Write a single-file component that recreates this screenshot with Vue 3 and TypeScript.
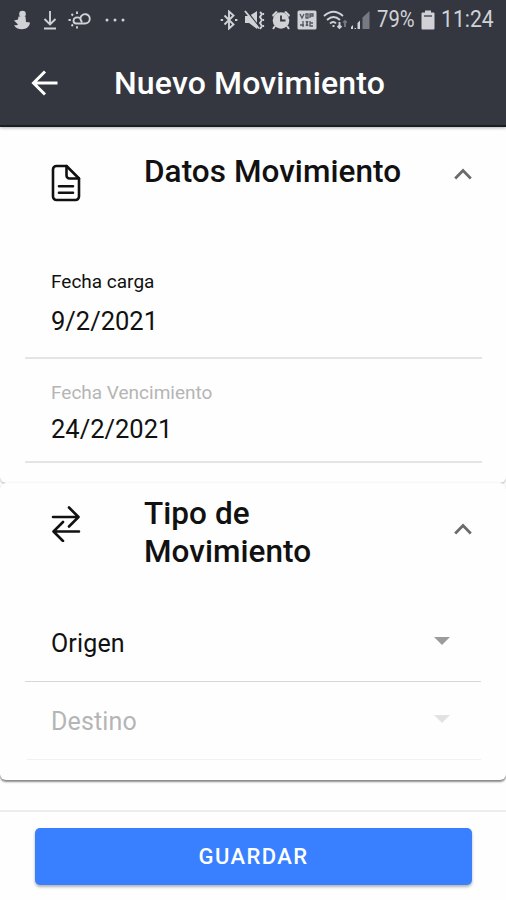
<script setup lang="ts">
import { ref } from 'vue'

interface DateField {
  label: string
  value: string
  muted: boolean
}

interface SelectField {
  label: string
  disabled: boolean
}

const dates = ref<DateField[]>([
  { label: 'Fecha carga', value: '9/2/2021', muted: false },
  { label: 'Fecha Vencimiento', value: '24/2/2021', muted: true },
])

const selects = ref<SelectField[]>([
  { label: 'Origen', disabled: false },
  { label: 'Destino', disabled: true },
])
</script>

<template>
  <div class="screen">
    <header class="header">
      <div class="status">
        <div class="status-left">
          <svg class="ic-figure" width="18" height="20" viewBox="0 0 18 20">
            <circle cx="9.500" cy="4" r="3.300" />
            <path d="M5.500 6.500h7l.5 5.500 4 .5c-.6 4.500-3.500 6.700-8 6.700-4 0-6.500-1.200-8-4.200 2 .6 3.200.4 4-.4L1 10.500l4-1z" />
          </svg>
          <svg width="14" height="20" viewBox="0 0 14 20" class="line">
            <path d="M7 1v13M1.500 9L7 14.500 12.500 9M1 18.500h12" />
          </svg>
          <svg width="24" height="18" viewBox="0 0 24 18" class="line">
            <path d="M8 12.500h9a4.700 4.700 0 1 0-4.400-6.200c-.6 2 .1 3.400 1.600 4.700M12 7C9 5.500 5.500 6.800 5.500 9.500c0 1.800 1 3 2.700 3" />
            <path d="M9 .5v2.500M3.500 3l1.500 1.500M.5 9h2.300M3.500 15L5 13.500M9 15.200v2.300" />
          </svg>
          <svg width="20" height="4" viewBox="0 0 20 4">
            <circle cx="2" cy="2" r="1.500" /><circle cx="10" cy="2" r="1.500" /><circle cx="18" cy="2" r="1.500" />
          </svg>
        </div>
        <div class="status-right">
          <svg width="18" height="20" viewBox="0 0 18 20" class="line">
            <path d="M4.500 5.500l9 9L9 18.500v-17l4.500 4-9 9" />
            <path d="M.7 10h2.400M15 10h2.400" />
          </svg>
          <svg width="21" height="20" viewBox="0 0 21 20">
            <path d="M1 6h4l8-5v18l-8-6H1z" />
            <path d="M2.500 .5l13 17" stroke="#343740" stroke-width="1.500" />
            <path class="line" d="M1 1l14 17.500" />
            <path class="line" d="M16 2l2 2-2 3 2 3-2 3 2 3-2 3" />
            <path class="line thin" d="M19.500 3v2M19.500 9v2M19.500 15v2" />
          </svg>
          <svg width="20" height="20" viewBox="0 0 20 20">
            <path d="M1 5l4-4 2 1-5 5zM19 5l-4-4-2 1 5 5z" />
            <circle cx="10" cy="10.500" r="8.300" />
            <path d="M4 16l-2 3M16 16l2 3" stroke="#d0d2d6" stroke-width="2" />
            <path d="M10 5.500v5h4.500" fill="none" stroke="#343740" stroke-width="1.800" />
          </svg>
          <svg width="20" height="20" viewBox="0 0 20 20">
            <rect x=".5" y=".5" width="19" height="19" rx="1.500" />
            <path d="M3 4l2 4 2-4M9 4v4h2V4zM13 8V4h3v2h-3M3 15h4M6 11v6M9 11l2 5M11 11l-2 5M13 11v5h3M13 13h3" fill="none" stroke="#555862" stroke-width="1.300" />
          </svg>
          <svg width="25" height="20" viewBox="0 0 25 20" class="line">
            <path d="M1 6Q10.500-2.500 20 6M4 10Q10.500 4 17 10M7 13.500q3.500-3 6 0" />
            <path d="M10.500 15v2M16.500 12v6M14.500 16l2 2 2-2" />
            <path class="dim" d="M22 17v-6M20.300 12.700L22 11l1.700 1.700" />
          </svg>
          <svg width="19" height="20" viewBox="0 0 19 20">
            <path d="M0 19v-2l2-2v4zM3.500 19v-1h1.500v1zM6.500 19v-6l2.500-2.500V19z" />
            <path d="M11.500 19V7.500L18.500 1v18z" fill="#777a82" />
          </svg>
          <span class="battery-text">79%</span>
          <svg width="14" height="20" viewBox="0 0 14 20">
            <path d="M4 .5h6v2h2.500a1 1 0 0 1 1 1v15a1 1 0 0 1-1 1h-11a1 1 0 0 1-1-1v-15a1 1 0 0 1 1-1H4z" />
            <path d="M3 6h8" stroke="#4c4f58" stroke-width="1.500" />
          </svg>
          <span class="clock">11:24</span>
        </div>
      </div>
      <div class="toolbar">
        <svg class="back" width="28" height="28" viewBox="0 0 28 28">
          <path d="M26.500 14H3M14 2.500L2.500 14 14 25.500" />
        </svg>
        <h1 class="title">Nuevo Movimiento</h1>
      </div>
    </header>

    <main class="content">
      <section class="card card-dates">
        <div class="card-head">
          <svg class="head-icon" width="30" height="38" viewBox="0 0 30 38">
            <path d="M5.500 2h10L28 14.500V32.500a3.500 3.500 0 0 1-3.500 3.500h-19A3.500 3.500 0 0 1 2 32.500v-27A3.500 3.500 0 0 1 5.500 2z" />
            <path d="M15.500 2v9.500a3 3 0 0 0 3 3H28M8 22.300h14M8 28.800h14" />
          </svg>
          <h2 class="head-title">Datos Movimiento</h2>
          <svg class="chevron" width="18" height="12" viewBox="0 0 18 12"><path d="M1.200 10.400L9 2.600l7.800 7.800" /></svg>
        </div>
        <div v-for="d in dates" :key="d.label" class="date-field" :class="{ muted: d.muted }">
          <span class="date-label">{{ d.label }}</span>
          <span class="date-value">{{ d.value }}</span>
        </div>
      </section>

      <section class="card card-type">
        <div class="card-head">
          <svg class="head-icon arrows" width="28" height="36" viewBox="0 0 28 36">
            <path d="M1 11h25M17 1.500l9.500 9.500L17 20.500M27 25.500H2M11 16l-9.500 9.500L11 35" />
          </svg>
          <h2 class="head-title">Tipo de Movimiento</h2>
          <svg class="chevron" width="18" height="12" viewBox="0 0 18 12"><path d="M1.200 10.400L9 2.600l7.800 7.800" /></svg>
        </div>
        <div v-for="s in selects" :key="s.label" class="select-field" :class="{ disabled: s.disabled }">
          <span class="select-label">{{ s.label }}</span>
          <svg class="caret" width="16" height="8" viewBox="0 0 16 8"><path d="M0 0h16L8 8z" /></svg>
        </div>
      </section>
    </main>

    <footer class="footer">
      <button class="save" type="button">GUARDAR</button>
    </footer>
  </div>
</template>

<style>
body {
  margin: 0;
  background: #fefefe;
}
</style>

<style scoped>
.screen {
  width: 506px;
  height: 900px;
  display: flex;
  flex-direction: column;
  overflow: hidden;
  background: #fefefe;
  font-family: Roboto, "Liberation Sans", sans-serif;
  color: #111;
}
.header {
  height: 127px;
  flex: none;
  box-sizing: border-box;
  background: #343740;
  border-bottom: 2px solid #1c1e26;
  box-shadow: 0 1px 3px rgba(0, 0, 0, 0.3);
  position: relative;
  z-index: 1;
}
.status {
  height: 40px;
  box-sizing: border-box;
  padding: 0 13px;
  display: flex;
  align-items: center;
  justify-content: space-between;
  color: #d0d2d6;
}
.status svg {
  flex: none;
  fill: #d0d2d6;
}
.status svg.line,
.status .line {
  fill: none;
  stroke: #d0d2d6;
  stroke-width: 1.9;
}
.status .thin {
  stroke-width: 1.2;
}
.status .dim {
  stroke: #777a82;
}
.status-left {
  display: flex;
  align-items: center;
  gap: 12px;
}
.status-left svg:nth-child(3) {
  margin: 0 1px 0 -1px;
}
.status-right {
  display: flex;
  align-items: center;
  gap: 6px;
}
.status-right svg:nth-child(6) {
  margin-left: -3px;
}
.battery-text,
.clock {
  font-size: 23px;
  line-height: 40px;
  transform-origin: left center;
}
.battery-text {
  width: 38px;
  margin-left: 1px;
  transform: scaleX(0.88);
}
.clock {
  width: 52px;
  transform: scaleX(0.92);
}
.toolbar {
  height: 86px;
  padding-left: 31px;
  display: flex;
  align-items: center;
}
.back {
  fill: none;
  stroke: #fff;
  stroke-width: 3;
}
.title {
  margin: 0 0 0 55px;
  font-size: 32px;
  line-height: 38px;
  font-weight: 500;
  letter-spacing: 0.15px;
  color: #fff;
  white-space: nowrap;
}
.content {
  height: 683px;
  flex: none;
}
.card {
  box-sizing: border-box;
  background: #fefefe;
}
.card-dates {
  height: 356px;
  padding: 26px 25px 0;
  border-radius: 0 0 6px 6px;
  box-shadow: 0 1px 2px rgba(0, 0, 0, 0.3);
}
.card-type {
  height: 297px;
  padding: 12px 25px 0;
  border-radius: 6px;
  box-shadow: 0 2px 2px rgba(0, 0, 0, 0.45), 0 0 3px rgba(0, 0, 0, 0.08);
  position: relative;
}
.card-head {
  display: flex;
  align-items: flex-start;
  padding: 0 9.500px 0 26px;
}
.head-icon {
  flex: none;
  width: 30px;
  margin-top: 11px;
  fill: none;
  stroke: #111;
  stroke-width: 2.6;
  stroke-linejoin: round;
  stroke-linecap: round;
}
.head-title {
  margin: 0 0 0 63px;
  width: 270px;
  font-size: 31.500px;
  line-height: 38px;
  font-weight: 500;
  letter-spacing: 0.05px;
}
.card-type .head-title {
  width: 200px;
}
.chevron {
  flex: none;
  margin: 15px 0 0 auto;
  fill: none;
  stroke: #6b6b6b;
  stroke-width: 2.8;
}
.card-type .chevron {
  margin-top: 28px;
}
.date-field {
  height: 104px;
  box-sizing: border-box;
  margin-right: -1px;
  padding: 13px 26px 0;
  border-bottom: 2px solid #e4e4e4;
  display: flex;
  flex-direction: column;
  gap: 7px;
}
.date-field.muted {
  padding-top: 20px;
  gap: 4px;
}
.card-dates .card-head {
  height: 102px;
}
.date-label {
  font-size: 19px;
  line-height: 28px;
}
.date-value {
  font-size: 25.500px;
  line-height: 36px;
}
.muted .date-label {
  color: #b5b5b5;
}
.card-type .card-head {
  height: 109px;
}
.select-field {
  height: 78px;
  box-sizing: border-box;
  padding: 3px 31px 0 26px;
  border-bottom: 1px solid #d8d8d8;
  display: flex;
  align-items: center;
  justify-content: space-between;
}
.select-label {
  font-size: 25px;
  line-height: 32px;
  letter-spacing: 0.15px;
}
.caret {
  margin-bottom: 7px;
  fill: #9c9c9c;
}
.disabled {
  margin: 0 0 0 2px;
  padding-left: 24px;
  border-bottom-color: #f1f1f1;
}
.disabled .select-label {
  color: #b5b5b5;
}
.disabled .caret {
  fill: #e2e2e2;
}
.footer {
  flex: 1;
  box-sizing: border-box;
  padding: 16px 34px 0 35px;
  border-top: 2px solid #eeedec;
}
.save {
  display: block;
  width: 100%;
  height: 57px;
  padding: 0;
  border: 0;
  border-radius: 5px;
  background: #3880ff;
  box-shadow: 0 2px 3px rgba(0, 0, 0, 0.3);
  color: #fff;
  font-family: inherit;
  font-size: 22px;
  font-weight: 500;
  letter-spacing: 1.400px;
}
</style>
